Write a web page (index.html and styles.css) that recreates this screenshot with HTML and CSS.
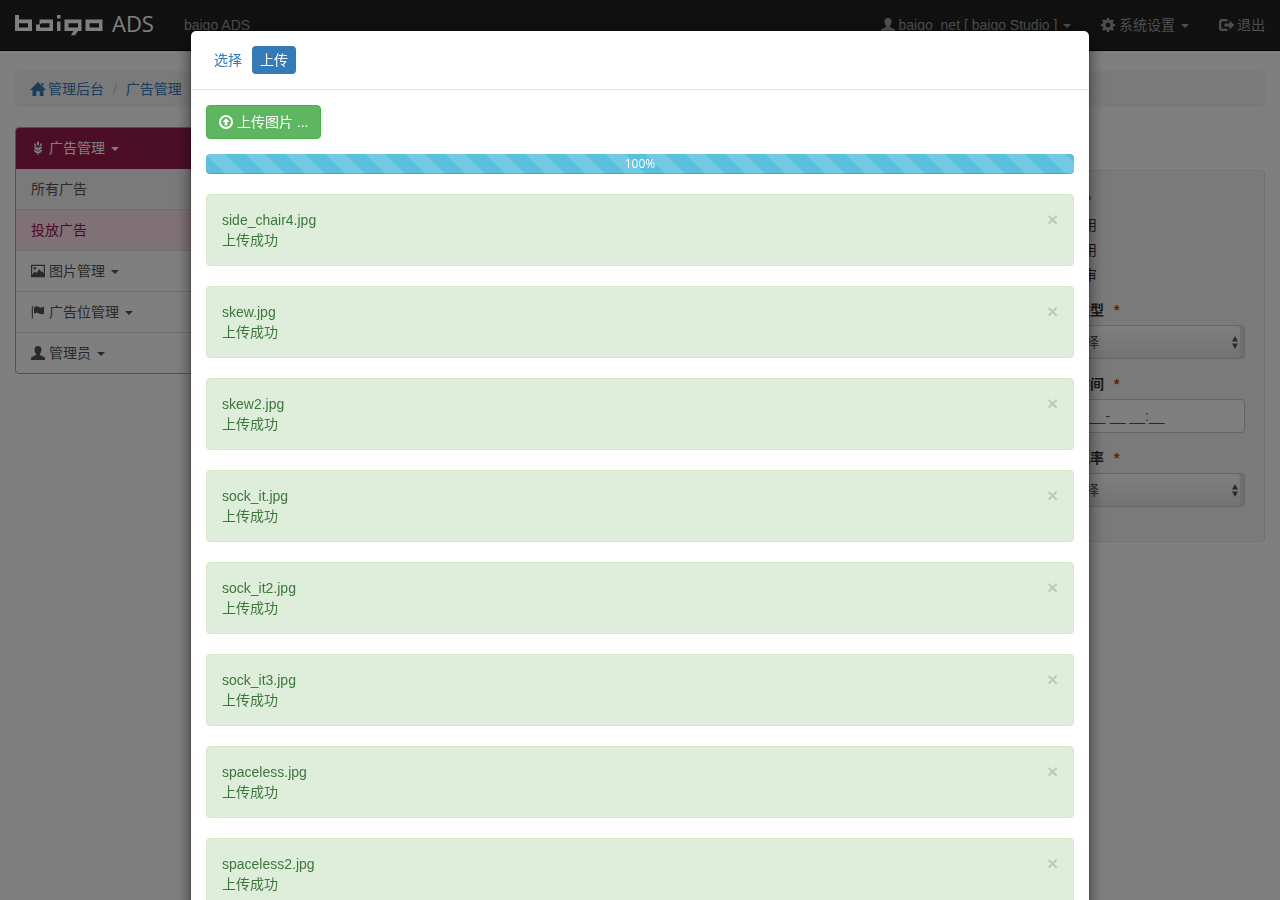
FILE: index.html
```html
<!DOCTYPE html>
<html lang="zh-CN">
<head>
<meta charset="utf-8">
<meta name="viewport" content="width=device-width, initial-scale=1">
<title>baigo ADS</title>
<link rel="stylesheet" href="styles.css">
</head>
<body>
<svg class="sprite" aria-hidden="true">
  <symbol id="i-user" viewBox="0 0 14 14"><path d="M7 0C4.700 0 3.500 1.500 3.500 3.600c0 1.700.6 3.300 1.500 4.200.3.600.1 1.200-.5 1.500L1.300 10.800C.4 11.200 0 11.800 0 12.600V14h14v-1.400c0-.8-.4-1.400-1.300-1.800L9.500 9.300c-.6-.3-.8-.9-.5-1.500.9-.9 1.500-2.500 1.500-4.200C10.500 1.500 9.300 0 7 0z"/></symbol>
  <symbol id="i-cog" viewBox="0 0 14 14"><path fill-rule="evenodd" d="M5.900 0h2.200l.4 1.900 1 .4L11.200 1.300l1.500 1.500-1 1.700.4 1 1.900.4v2.200l-1.900.4-.4 1 1 1.700-1.500 1.500-1.700-1-1 .4L8.100 14H5.900l-.4-1.900-1-.4-1.700 1-1.500-1.500 1-1.700-.4-1L0 8.100V5.900l1.900-.4.4-1-1-1.700 1.500-1.500 1.700 1 1-.4zM7 4.500a2.500 2.500 0 1 0 0 5 2.500 2.500 0 0 0 0-5z"/></symbol>
  <symbol id="i-out" viewBox="0 0 16 14"><path d="M8.500 1H3.200A3.200 3.200 0 0 0 0 4.200v5.600a3.200 3.200 0 0 0 3.200 3.200h5.300v-2.200H3.700A1.500 1.500 0 0 1 2.200 9.300V4.700A1.500 1.500 0 0 1 3.700 3.200h4.800z"/><path d="M10.500 2.500 15.500 7 10.500 11.500V8.500H5.500V5.500h5z"/></symbol>
  <symbol id="i-home" viewBox="0 0 16 14"><path d="M8 0 16 8H13.500v6H9.700V9.300H6.300V14H2.500V8H0L8 0zM11.300 1h2v3.500l-2-2z"/></symbol>
  <symbol id="i-grain" viewBox="0 0 14 14"><path d="M7 0C8.600 1.600 8.600 3.200 7 4.700 5.400 3.200 5.400 1.600 7 0zM6.500 14V12.300C4.300 12 3 10.700 2.900 8.500 4.900 8.900 6.200 10 6.500 11.300V9C4.300 8.700 3 7.400 2.900 5.200 4.900 5.600 6.200 6.700 6.500 8V5.800h1V8C7.800 6.700 9.100 5.600 11.100 5.200 11 7.400 9.700 8.700 7.500 9v2.300C7.800 10 9.100 8.900 11.100 8.500 11 10.700 9.700 12 7.500 12.300V14zM3 1.900C4.900 2.700 5.600 3.800 5.400 5.400 3.800 4.900 3 3.700 3 1.900zM11 1.900C9.100 2.700 8.400 3.800 8.600 5.400 10.200 4.900 11 3.700 11 1.900z"/></symbol>
  <symbol id="i-picture" viewBox="0 0 14 14"><path fill-rule="evenodd" d="M0 .8h14v12.400H0zM1.200 2v8.800l2.400-3.300 1.700 1.400L8.500 5l1.800 3 1.200-.8 1.300 2.400V2z"/><circle cx="3.800" cy="4.200" r="1.200"/></symbol>
  <symbol id="i-flag" viewBox="0 0 14 14"><path d="M.8 1h1.100v12.500H.8zM3 2.200C5.200 1 6.200 1 8 2s3 .9 5-.4v6.800C11 9.600 10 9.500 8.200 8.500S5.200 7.600 3 8.800z"/></symbol>
  <symbol id="i-upload" viewBox="0 0 14 14"><path fill-rule="evenodd" d="M7 0a7 7 0 1 1 0 14A7 7 0 0 1 7 0zM7 2a5 5 0 1 0 0 10A5 5 0 0 0 7 2z"/><path d="M7 3.200 10.500 7H8.300v3.500H5.700V7H3.500z"/></symbol>
  <symbol id="i-updown" viewBox="0 0 6 14"><path d="M3 0 6 5.500H0zM3 13 6 7.500H0z"/></symbol>
</svg>

<header class="navbar">
  <a class="brand" href="#" aria-label="baigo ADS">
    <svg class="brand-mark" viewBox="0 0 88 21" aria-hidden="true">
      <path fill-rule="evenodd" d="M0 0h4v4.500h13V16H0zM4 8.200v4.200h9V8.200z"/>
      <path fill-rule="evenodd" d="M24.500 4.500H38V16H21V9.500h3.500zM25 9.500v3h9.500V8.200h-8z"/>
      <path d="M42 0h3.500v3.500H42zM42 6.500h3.500V16H42z"/>
      <path fill-rule="evenodd" d="M49.500 4.500h17V16H63l-3 4.200h-4L58.500 16h-9zM53.500 8.200v4.200H63V8.200z"/>
      <path fill-rule="evenodd" d="M70.500 4.500h17V16h-17zM74.500 8.200v4.200H84V8.200z"/>
    </svg>
    <span class="brand-name">ADS</span>
  </a>
  <a class="nav-link" href="#">baigo ADS</a>
  <nav class="nav-right">
    <a class="nav-link" href="#"><svg class="icon"><use href="#i-user"/></svg> baigo_net [ baigo Studio ] <i class="caret"></i></a>
    <a class="nav-link" href="#"><svg class="icon"><use href="#i-cog"/></svg> 系统设置 <i class="caret"></i></a>
    <a class="nav-link" href="#"><svg class="icon icon-wide"><use href="#i-out"/></svg>退出</a>
  </nav>
</header>

<main class="container">
  <nav class="breadcrumb">
    <a href="#"><svg class="icon icon-wide"><use href="#i-home"/></svg>管理后台</a>
    <span class="slash">/</span>
    <a href="#">广告管理</a>
  </nav>
  <div class="columns">
    <nav class="side">
      <a class="side-item side-head" href="#"><svg class="icon"><use href="#i-grain"/></svg> 广告管理 <i class="caret"></i></a>
      <a class="side-item side-sub" href="#">所有广告</a>
      <a class="side-item side-active" href="#">投放广告</a>
      <a class="side-item" href="#"><svg class="icon"><use href="#i-picture"/></svg> 图片管理 <i class="caret"></i></a>
      <a class="side-item" href="#"><svg class="icon"><use href="#i-flag"/></svg> 广告位管理 <i class="caret"></i></a>
      <a class="side-item" href="#"><svg class="icon"><use href="#i-user"/></svg> 管理员 <i class="caret"></i></a>
    </nav>
    <form class="well">
      <fieldset class="group">
        <legend class="label">状态 <span class="star">*</span></legend>
        <label class="radio"><input type="radio" name="status"> 启用</label>
        <label class="radio"><input type="radio" name="status"> 禁用</label>
        <label class="radio"><input type="radio" name="status"> 待审</label>
      </fieldset>
      <div class="group">
        <label class="label" for="type">投放类型 <span class="star">*</span></label>
        <div class="select"><select class="control" id="type"><option>请选择</option></select><svg class="arrows"><use href="#i-updown"/></svg></div>
      </div>
      <div class="group">
        <label class="label" for="time">生效时间 <span class="star">*</span></label>
        <input class="control" id="time" type="text" value="____-__-__ __:__">
      </div>
      <div class="group">
        <label class="label" for="rate">展现几率 <span class="star">*</span></label>
        <div class="select"><select class="control" id="rate"><option>请选择</option></select><svg class="arrows"><use href="#i-updown"/></svg></div>
      </div>
    </form>
  </div>
</main>

<div class="backdrop">
  <section class="modal" role="dialog" aria-label="上传">
    <div class="modal-head">
      <a class="pill" href="#">选择</a>
      <a class="pill pill-on" href="#">上传</a>
    </div>
    <div class="modal-body">
      <button class="upload" type="button"><svg class="icon"><use href="#i-upload"/></svg> 上传图片 ...</button>
      <div class="progress">100%</div>
      <div class="alert"><p>side_chair4.jpg<br>上传成功</p><button class="close" type="button" aria-label="关闭">×</button></div>
      <div class="alert"><p>skew.jpg<br>上传成功</p><button class="close" type="button" aria-label="关闭">×</button></div>
      <div class="alert"><p>skew2.jpg<br>上传成功</p><button class="close" type="button" aria-label="关闭">×</button></div>
      <div class="alert"><p>sock_it.jpg<br>上传成功</p><button class="close" type="button" aria-label="关闭">×</button></div>
      <div class="alert"><p>sock_it2.jpg<br>上传成功</p><button class="close" type="button" aria-label="关闭">×</button></div>
      <div class="alert"><p>sock_it3.jpg<br>上传成功</p><button class="close" type="button" aria-label="关闭">×</button></div>
      <div class="alert"><p>spaceless.jpg<br>上传成功</p><button class="close" type="button" aria-label="关闭">×</button></div>
      <div class="alert"><p>spaceless2.jpg<br>上传成功</p><button class="close" type="button" aria-label="关闭">×</button></div>
    </div>
  </section>
</div>
</body>
</html>
```
FILE: styles.css
```css
* { box-sizing: border-box; }
body {
  margin: 0;
  font: 14px/20px "Liberation Sans", "Noto Sans CJK SC", sans-serif;
  color: #333;
  background: #fff;
}
a { color: #337ab7; text-decoration: none; }
p { margin: 0; }
button, input, select { font: inherit; }
.sprite { display: none; }
.icon { width: 14px; height: 14px; fill: currentColor; vertical-align: -2px; }
.icon-wide { width: 16px; margin-right: 2px; }
.caret {
  display: inline-block;
  margin-left: 2px;
  border: 4px solid transparent;
  border-top-color: currentColor;
  border-bottom: 0;
  vertical-align: middle;
}

.navbar {
  display: flex;
  height: 51px;
  background: #222;
  border-bottom: 1px solid #080808;
}
.brand { display: flex; gap: 9px; padding: 0 15px; color: #fff; }
.brand-mark { width: 88px; height: 21px; margin-top: 15px; fill: #fff; }
.brand-name { font: 22px/46px "Open Sans", sans-serif; }
.nav-link { padding: 15px; color: #9d9d9d; white-space: nowrap; }
.nav-right { display: flex; margin-left: auto; }

.container { padding: 20px 15px; }
.breadcrumb {
  margin-bottom: 20px;
  padding: 8px 15px;
  background: #f5f5f5;
  border-radius: 4px;
}
.slash { padding: 0 5px; color: #ccc; }
.columns { display: flex; justify-content: space-between; align-items: flex-start; }
.side {
  width: 184px;
  border: 1px solid #e0849c;
  border-radius: 4px;
  overflow: hidden;
}
.side-item { display: block; padding: 10px 15px; color: #555; }
.side-item + .side-item { border-top: 1px solid #ddd; }
.side-head { padding-bottom: 11px; color: #fff; background: #961d4d; }
.side-item.side-sub { padding-top: 9px; background: #f5f5f5; border-color: #f5f5f5; }
.side-item.side-active { color: #a3124f; background: #ffe3eb; }

.well {
  width: 237px;
  margin-top: 43px;
  padding: 19px;
  background: #f5f5f5;
  border: 1px solid #e3e3e3;
  border-radius: 4px;
}
.group { margin: 0 0 15px; padding: 0; border: 0; }
.label { display: block; margin-bottom: 5px; padding: 0; font-weight: 700; }
.star { margin-left: 6px; color: #e03010; }
.radio { display: flex; gap: 8px; margin-bottom: 5px; }
.radio:last-child { margin-bottom: 0; }
.radio input { margin: 4px 0 0; }
.control {
  display: block;
  width: 100%;
  height: 34px;
  padding: 6px 5px;
  color: #555;
  background: #fff;
  border: 1px solid #ccc;
  border-radius: 4px;
}
.select { position: relative; }
.select .control {
  padding: 6px 8px;
  appearance: none;
  background: linear-gradient(#fff, #e6e6e6);
  box-shadow: inset -4px 0 1px #ddd;
}
.arrows { position: absolute; right: 7px; top: 11px; width: 6px; height: 14px; fill: #555; }

.backdrop {
  position: fixed;
  inset: 0;
  padding: 30px 10px;
  background: rgba(0, 0, 0, .5);
  overflow: hidden;
}
.modal {
  max-width: 900px;
  margin: 0 auto;
  background: #fff;
  background-clip: padding-box;
  border: 1px solid rgba(0, 0, 0, .2);
  border-radius: 6px;
  box-shadow: 0 5px 15px rgba(0, 0, 0, .5);
}
.modal-head {
  display: flex;
  gap: 2px;
  padding: 15px;
  border-bottom: 1px solid #e5e5e5;
}
.pill { padding: 4px 8px; border-radius: 4px; }
.pill-on { color: #fff; background: #337ab7; }
.modal-body { padding: 15px; }
.upload {
  display: block;
  padding: 6px 12px;
  color: #fff;
  background: #5fb660;
  border: 1px solid #4cae4c;
  border-radius: 4px;
}
.progress {
  margin: 15px 0 20px;
  color: #fff;
  font: 12px/20px "Open Sans", sans-serif;
  text-align: center;
  background: linear-gradient(45deg, rgba(255, 255, 255, .15) 25%, transparent 25%, transparent 50%, rgba(255, 255, 255, .15) 50%, rgba(255, 255, 255, .15) 75%, transparent 75%) 0 0 / 40px 40px #5bc0de;
  border-radius: 4px;
  box-shadow: inset 0 -1px 0 rgba(0, 0, 0, .15);
}
.alert {
  display: flex;
  justify-content: space-between;
  align-items: flex-start;
  margin-bottom: 20px;
  padding: 15px;
  color: #3c763d;
  background: #dfeeda;
  border: 1px solid #d6e9c6;
  border-radius: 4px;
}
.close {
  padding: 0;
  color: #185018;
  font-size: 19px;
  font-weight: 700;
  line-height: 20px;
  background: none;
  border: 0;
  opacity: .2;
}
```
